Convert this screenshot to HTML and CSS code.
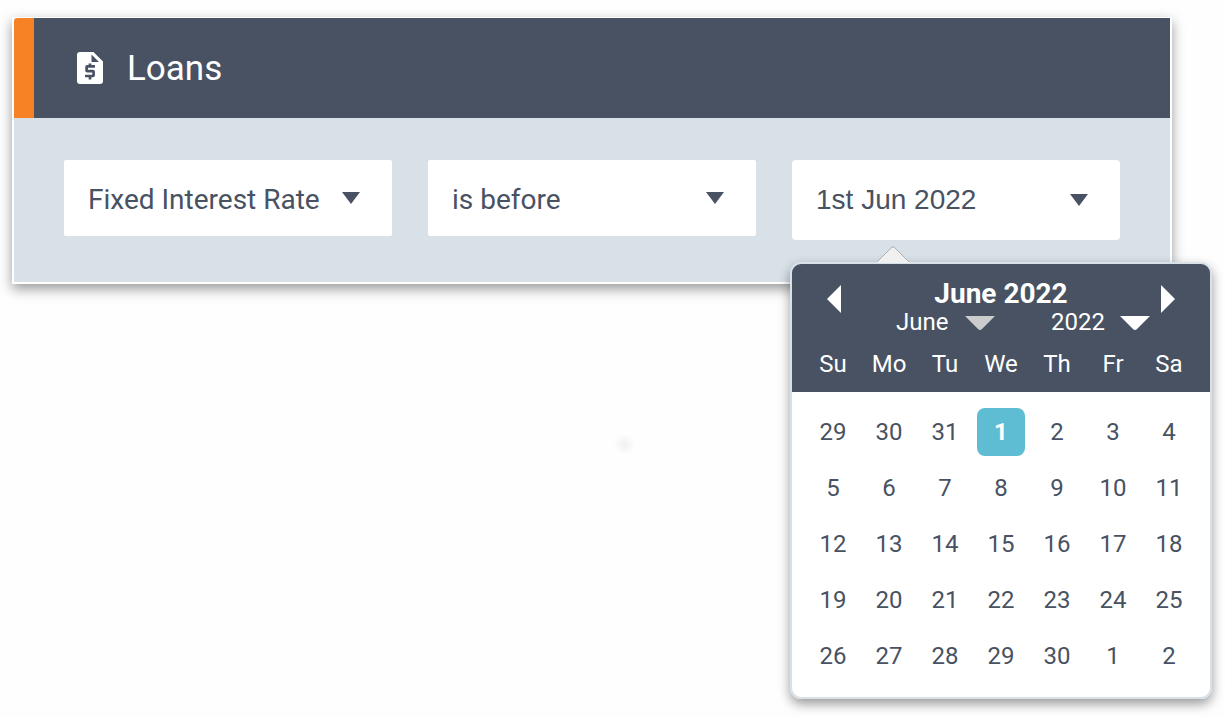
FILE: index.html
```html
<!DOCTYPE html>
<html lang="en">
<head>
<meta charset="utf-8">
<meta name="viewport" content="width=device-width, initial-scale=1">
<title>Loans</title>
<link rel="stylesheet" href="styles.css">
</head>
<body>
<main class="card">
  <header class="card-header">
    <svg class="card-icon" viewBox="0 0 26 32" aria-hidden="true">
      <path fill="#fff" fill-rule="evenodd" d="M3 0H16.500L26 9.500V29a3 3 0 0 1-3 3H3a3 3 0 0 1-3-3V3a3 3 0 0 1 3-3ZM14.500 2.500V10H22Z"/>
      <path fill="none" stroke="#485262" stroke-width="2.700" d="M18 14.300H10.200Q9.600 14.300 9.600 15V18.400Q9.600 19.200 10.300 19.200H15.900Q16.600 19.200 16.600 20V23.200Q16.600 24 15.900 24H8M13 11.500V14.500M13 24V27.500"/>
    </svg>
    <h1 class="card-title">Loans</h1>
  </header>
  <form class="filters">
    <div class="field">
      <select class="field-control" aria-label="Field"><option>Fixed Interest Rate</option></select>
      <svg class="caret" viewBox="0 0 18 12" aria-hidden="true"><path d="M0 0H18L9 12Z"/></svg>
    </div>
    <div class="field">
      <select class="field-control" aria-label="Condition"><option>is before</option></select>
      <svg class="caret" viewBox="0 0 18 12" aria-hidden="true"><path d="M0 0H18L9 12Z"/></svg>
    </div>
    <div class="field">
      <button class="field-control field-date" type="button" aria-expanded="true">1st Jun 2022</button>
      <svg class="caret" viewBox="0 0 18 12" aria-hidden="true"><path d="M0 0H18L9 12Z"/></svg>
      <section class="calendar" aria-label="Choose date">
        <svg class="pointer" viewBox="0 0 34 17" aria-hidden="true"><path fill="#f0f0f0" d="M0 17L16 1H18L34 17Z"/><path fill="none" stroke="#aeaeae" d="M1 16L16 1H18L33 16"/></svg>
        <div class="calendar-header">
          <div class="calendar-nav">
            <button class="nav-button" type="button" aria-label="Previous month"><svg viewBox="0 0 14 28" aria-hidden="true"><path d="M14 0V28L0 14Z"/></svg></button>
            <h2 class="calendar-title">June 2022</h2>
            <button class="nav-button" type="button" aria-label="Next month"><svg viewBox="0 0 14 28" aria-hidden="true"><path d="M0 0V28L14 14Z"/></svg></button>
          </div>
          <div class="calendar-picks">
            <div class="pick">
              <select class="pick-control" aria-label="Month"><option>June</option></select>
              <svg class="pick-caret pick-caret-muted" viewBox="0 0 30 14" aria-hidden="true"><path d="M0 0H30L17 13Q15 15 13 13Z"/></svg>
            </div>
            <div class="pick">
              <select class="pick-control" aria-label="Year"><option>2022</option></select>
              <svg class="pick-caret" viewBox="0 0 30 14" aria-hidden="true"><path d="M0 0H30L17 13Q15 15 13 13Z"/></svg>
            </div>
          </div>
        </div>
        <table class="days">
          <thead><tr><th>Su</th><th>Mo</th><th>Tu</th><th>We</th><th>Th</th><th>Fr</th><th>Sa</th></tr></thead>
          <tbody>
            <tr><td><button class="day" type="button">29</button></td><td><button class="day" type="button">30</button></td><td><button class="day" type="button">31</button></td><td><button class="day day-selected" type="button">1</button></td><td><button class="day" type="button">2</button></td><td><button class="day" type="button">3</button></td><td><button class="day" type="button">4</button></td></tr>
            <tr><td><button class="day" type="button">5</button></td><td><button class="day" type="button">6</button></td><td><button class="day" type="button">7</button></td><td><button class="day" type="button">8</button></td><td><button class="day" type="button">9</button></td><td><button class="day" type="button">10</button></td><td><button class="day" type="button">11</button></td></tr>
            <tr><td><button class="day" type="button">12</button></td><td><button class="day" type="button">13</button></td><td><button class="day" type="button">14</button></td><td><button class="day" type="button">15</button></td><td><button class="day" type="button">16</button></td><td><button class="day" type="button">17</button></td><td><button class="day" type="button">18</button></td></tr>
            <tr><td><button class="day" type="button">19</button></td><td><button class="day" type="button">20</button></td><td><button class="day" type="button">21</button></td><td><button class="day" type="button">22</button></td><td><button class="day" type="button">23</button></td><td><button class="day" type="button">24</button></td><td><button class="day" type="button">25</button></td></tr>
            <tr><td><button class="day" type="button">26</button></td><td><button class="day" type="button">27</button></td><td><button class="day" type="button">28</button></td><td><button class="day" type="button">29</button></td><td><button class="day" type="button">30</button></td><td><button class="day" type="button">1</button></td><td><button class="day" type="button">2</button></td></tr>
          </tbody>
        </table>
      </section>
    </div>
  </form>
</main>
</body>
</html>
```

FILE: styles.css
```css
* {
  box-sizing: border-box;
}

body {
  min-height: 100vh;
  margin: 0;
  padding: 17px 53px 18px 12px;
  background: radial-gradient(circle at 51% 62%, #f1f1f1 0, #fefefe 11px);
  font-family: Roboto, "Liberation Sans", sans-serif;
  color: #485262;
}

button,
select {
  margin: 0;
  padding: 0;
  border: 0;
  background: none;
  color: inherit;
  font: inherit;
  appearance: none;
  cursor: pointer;
}

svg {
  display: block;
}

.card {
  border: 2px solid #fff;
  border-top-width: 1px;
  background: #d8e0e8;
  box-shadow: 0 5px 12px rgba(0, 0, 0, 0.4);
}

.card-header {
  display: flex;
  align-items: center;
  gap: 24px;
  height: 100px;
  padding-left: 43px;
  border-left: 20px solid #f78225;
  border-top-left-radius: 4px;
  background: #485262;
  color: #fff;
}

.card-icon {
  width: 26px;
  height: 32px;
}

.card-title {
  margin: 0;
  padding-top: 2px;
  font-size: 35px;
  font-weight: 400;
  line-height: 40px;
}

.filters {
  display: grid;
  grid-template-columns: repeat(3, 1fr);
  align-items: start;
  gap: 36px;
  padding: 42px 50px;
}

.field {
  position: relative;
}

.field-control {
  display: block;
  width: 100%;
  height: 76px;
  padding: 2px 72px 0 24px;
  border-radius: 2px;
  background: #fff;
  font-size: 28px;
  text-align: left;
}

.field-date {
  height: 80px;
  padding-top: 0;
  border-radius: 4px;
  font-family: "Liberation Sans", Arial, sans-serif;
}

.caret {
  position: absolute;
  top: 32px;
  right: 32px;
  width: 18px;
  height: 12px;
  fill: #485262;
  pointer-events: none;
}

.field-date + .caret {
  top: 34px;
}

.calendar {
  position: absolute;
  top: 102px;
  left: -2px;
  z-index: 1;
  width: 422px;
  border: 2px solid #d8e0e8;
  border-radius: 11px;
  background: linear-gradient(#485262 128px, #fff 128px);
  box-shadow: 0 5px 12px rgba(0, 0, 0, 0.4);
}

.pointer {
  position: absolute;
  top: -18px;
  left: 84px;
  width: 34px;
  height: 17px;
}

.calendar-header {
  height: 72px;
  padding: 16px 35px 0;
  color: #fff;
}

.calendar-nav {
  display: flex;
  align-items: center;
  justify-content: space-between;
  height: 28px;
}

.nav-button {
  padding-top: 10px;
}

.nav-button svg {
  width: 14px;
  height: 28px;
  fill: #fff;
}

.calendar-title {
  margin: 0;
  font-size: 28px;
  font-weight: 700;
  line-height: 28px;
}

.calendar-picks {
  display: flex;
  gap: 56px;
  padding-left: 69px;
}

.pick {
  position: relative;
}

.pick-control {
  display: block;
  width: 99px;
  height: 28px;
  font-size: 24px;
  line-height: 28px;
}

.pick-caret {
  position: absolute;
  top: 8px;
  right: 0;
  width: 30px;
  height: 14px;
  fill: #fff;
  pointer-events: none;
}

.pick-caret-muted {
  fill: #ccc;
}

.days {
  width: 392px;
  margin: 0 13px 13px;
  border-collapse: collapse;
  table-layout: fixed;
  font-size: 24px;
  text-align: center;
}

.days th {
  height: 56px;
  padding: 0;
  color: #fff;
  font-weight: 400;
}

.days tbody::before {
  content: "";
  display: block;
  height: 12px;
}

.days td {
  height: 56px;
  padding: 4px;
}

.day {
  display: block;
  width: 48px;
  height: 48px;
  border-radius: 8px;
}

.day-selected {
  background: #5fbdd3;
  color: #fff;
  font-weight: 700;
}
```
